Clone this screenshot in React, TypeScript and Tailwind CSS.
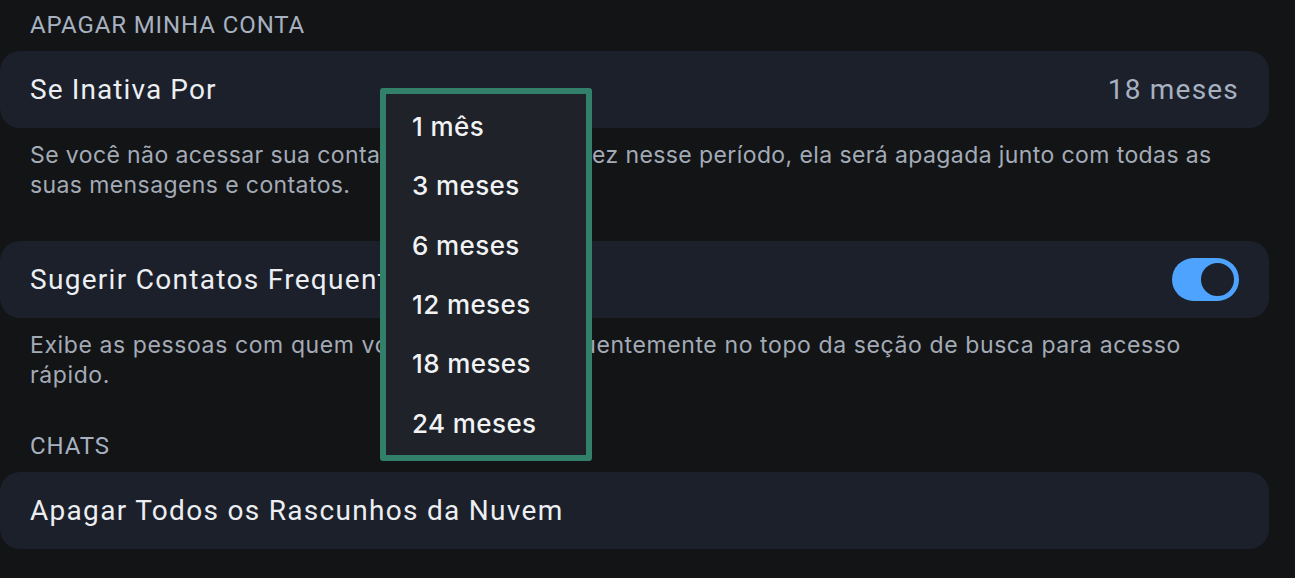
import React from 'react'

const OPTIONS = ['1 mês', '3 meses', '6 meses', '12 meses', '18 meses', '24 meses']

function SectionTitle({ children }: { children: React.ReactNode }) {
  return <div className="px-[30px] text-[24px] leading-[28px] tracking-[0.9px] text-[#a7b1c0]">{children}</div>
}

function Card({ children }: { children: React.ReactNode }) {
  return (
    <div className="flex h-[77px] items-center justify-between rounded-[20px] bg-[#1b202b] pl-[30px] pr-[30px]">
      {children}
    </div>
  )
}

function Note({ children, tight }: { children: React.ReactNode; tight?: boolean }) {
  return (
    <div
      className={
        tight
          ? 'whitespace-nowrap px-[30px] text-[23px] leading-[30px] tracking-[0.4px] text-[#a3abb7]'
          : 'whitespace-nowrap px-[30px] text-[23px] leading-[30px] tracking-[0.6px] text-[#a3abb7]'
      }
      style={{ fontFamily: 'Inter, "Noto Sans", sans-serif' }}
    >
      {children}
    </div>
  )
}

function Toggle() {
  return (
    <div className="flex h-[43px] w-[67px] items-center justify-end rounded-full bg-[#4ea3ff] p-[3px]">
      <div className="h-[37px] w-[37px] rounded-full border-[2px] border-[#4ea3ff] bg-[#1b202b]" />
    </div>
  )
}

export default function App() {
  return (
    <div
      className="relative h-[578px] w-[1295px] overflow-hidden bg-[#131416] pr-[26px] pt-[11px]"
      style={{ fontFamily: 'Roboto, "Liberation Sans", sans-serif' }}
    >
      <SectionTitle>APAGAR MINHA CONTA</SectionTitle>
      <div className="mt-[12px]">
        <Card>
          <span className="text-[28px] tracking-[1.1px] text-[#eceef1]">Se Inativa Por</span>
          <span className="text-[28px] tracking-[1.2px] text-[#a7b1c0]">18 meses</span>
        </Card>
      </div>
      <div className="mt-[12px]">
        <Note tight>
          Se você não acessar sua conta pelo menos uma vez nesse período, ela será apagada junto com todas as
          <br />
          suas mensagens e contatos.
        </Note>
      </div>
      <div className="mt-[41px]">
        <Card>
          <span className="text-[28px] tracking-[1.3px] text-[#eceef1]">Sugerir Contatos Frequentes</span>
          <Toggle />
        </Card>
      </div>
      <div className="mt-[12px]">
        <Note>
          Exibe as pessoas com quem você conversa frequentemente no topo da seção de busca para acesso
          <br />
          rápido.
        </Note>
      </div>
      <div className="mt-[42px]">
        <SectionTitle>CHATS</SectionTitle>
      </div>
      <div className="mt-[12px]">
        <Card>
          <span className="text-[28px] tracking-[1.3px] text-[#eceef1]">Apagar Todos os Rascunhos da Nuvem</span>
        </Card>
      </div>

      {/* dropdown menu */}
      <div
        className="absolute left-[380px] top-[88px] flex w-[212px] flex-col rounded-[3px] border-[6px] border-[#33806a] bg-[#1f2229] pb-[2px] pl-[26px] pt-[3px]"
        style={{ fontFamily: 'Inter, "Noto Sans", sans-serif' }}
      >
        {OPTIONS.map(o => (
          <div key={o} className="flex h-[59.3px] items-center text-[26px] font-medium tracking-[0.4px] text-[#f1f2f4]">
            {o}
          </div>
        ))}
      </div>
    </div>
  )
}
